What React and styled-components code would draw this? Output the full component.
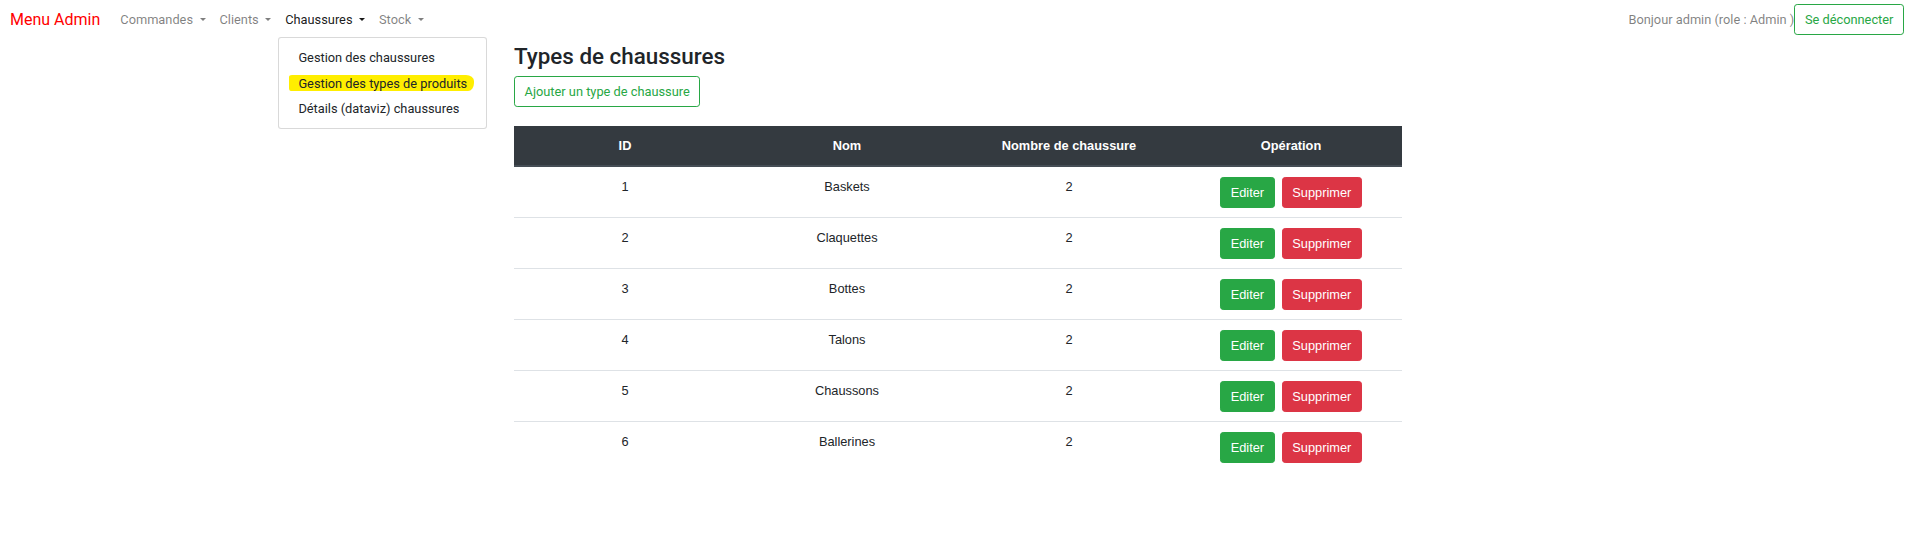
import React from "react";
import styled, { createGlobalStyle } from 'styled-components';

const GlobalStyle = createGlobalStyle`
    body {
        margin: 0;
        background: #fff;
        font-family: Roboto, "Liberation Sans", sans-serif;
        font-size: 12.8px;
        line-height: 1.5;
        color: #212529;
    }
`

const Navbar = styled.nav`
    display: flex;
    align-items: center;
    height: 39px;
    padding: 0 12px 0 10px;
`

const Brand = styled.a`
    font-size: 16px;
    line-height: 1.5;
    color: #ff0000;
    margin-right: 13px;
    white-space: nowrap;
`

const NavList = styled.ul`
    display: flex;
    list-style: none;
    margin: 0;
    padding: 0;
`

const NavItem = styled.li`
    position: relative;
`

const NavLink = styled.a`
    display: block;
    padding: 6.4px 7px;
    line-height: 19.2px;
    color: ${props => props.$active ? 'rgba(0, 0, 0, 0.9)' : 'rgba(0, 0, 0, 0.5)'};
    white-space: nowrap;

    &::after {
        content: "";
        display: inline-block;
        margin-left: 6.5px;
        vertical-align: 3.3px;
        border-top: 3.4px solid;
        border-right: 3.4px solid transparent;
        border-left: 3.4px solid transparent;
    }
`

const DropdownMenu = styled.div`
    position: absolute;
    top: calc(100% + 2px);
    left: 0;
    width: 209px;
    box-sizing: border-box;
    padding: 6.4px 0;
    background: #fff;
    border: 1px solid rgba(0, 0, 0, 0.15);
    border-radius: 3.2px;
    z-index: 10;
`

const DropdownItem = styled.a`
    display: block;
    padding: 3.2px 19.2px;
    line-height: 19.2px;
    color: #212529;
    white-space: nowrap;
`

const Marker = styled.span`
    margin-left: -9px;
    padding: 1px 7px 0 9px;
    background: #ffee00;
    border-radius: 3px 8px 6px 2px / 2px 6px 8px 3px;
`

const UserBox = styled.div`
    margin-left: auto;
    display: flex;
    align-items: center;
`

const Greeting = styled.span`
    color: rgba(0, 0, 0, 0.5);
    white-space: nowrap;
`

const OutlineButton = styled.button`
    font-family: Roboto, "Liberation Sans", sans-serif;
    font-size: 12.8px;
    line-height: 19.2px;
    padding: 4.8px 9.6px;
    color: #28a745;
    background: transparent;
    border: 1px solid #28a745;
    border-radius: 3.2px;
    white-space: nowrap;
    cursor: pointer;
`

const Container = styled.main`
    max-width: 888px;
    margin: 0 auto;
    padding: 4px 12px 0;
`

const Title = styled.h3`
    margin: 0 0 6.4px;
    font-size: 22.4px;
    font-weight: 500;
    line-height: 1.2;
`

const Table = styled.table`
    width: 100%;
    margin-top: 19px;
    border-collapse: collapse;
    table-layout: fixed;
    font-family: "Liberation Sans", Arial, sans-serif;
    font-size: 12.8px;
    color: #212529;
`

const HeadCell = styled.th`
    padding: 10.1px 9.6px;
    line-height: 19.2px;
    background: #343a40;
    color: #fff;
    font-weight: 700;
    text-align: center;
    border-bottom: 2px solid #454d55;
`

const Cell = styled.td`
    padding: 9.6px;
    line-height: 19.2px;
    text-align: center;
    vertical-align: top;
    border-top: 1px solid #dee2e6;
`

const Actions = styled.div`
    display: flex;
    justify-content: center;
    gap: 7px;
`

const ActionButton = styled.button`
    font-family: "Liberation Sans", Arial, sans-serif;
    font-size: 12.8px;
    line-height: 19.2px;
    padding: 4.8px 9.6px;
    color: #fff;
    background: ${props => props.$danger ? '#dc3545' : '#28a745'};
    border: 1px solid ${props => props.$danger ? '#dc3545' : '#28a745'};
    border-radius: 3.2px;
    cursor: pointer;
`

const types = [
    { id: 1, nom: "Baskets", nombre: 2 },
    { id: 2, nom: "Claquettes", nombre: 2 },
    { id: 3, nom: "Bottes", nombre: 2 },
    { id: 4, nom: "Talons", nombre: 2 },
    { id: 5, nom: "Chaussons", nombre: 2 },
    { id: 6, nom: "Ballerines", nombre: 2 },
];

const App = () => {
    return (
        <>
            <GlobalStyle />
            <Navbar>
                <Brand>Menu Admin</Brand>
                <NavList>
                    <NavItem><NavLink>Commandes</NavLink></NavItem>
                    <NavItem><NavLink>Clients</NavLink></NavItem>
                    <NavItem>
                        <NavLink $active>Chaussures</NavLink>
                        <DropdownMenu>
                            <DropdownItem>Gestion des chaussures</DropdownItem>
                            <DropdownItem><Marker>Gestion des types de produits</Marker></DropdownItem>
                            <DropdownItem>Détails (dataviz) chaussures</DropdownItem>
                        </DropdownMenu>
                    </NavItem>
                    <NavItem><NavLink>Stock</NavLink></NavItem>
                </NavList>
                <UserBox>
                    <Greeting>Bonjour admin (role : Admin )</Greeting>
                    <OutlineButton>Se déconnecter</OutlineButton>
                </UserBox>
            </Navbar>
            <Container>
                <Title>Types de chaussures</Title>
                <OutlineButton>Ajouter un type de chaussure</OutlineButton>
                <Table>
                    <thead>
                        <tr>
                            <HeadCell>ID</HeadCell>
                            <HeadCell>Nom</HeadCell>
                            <HeadCell>Nombre de chaussure</HeadCell>
                            <HeadCell>Opération</HeadCell>
                        </tr>
                    </thead>
                    <tbody>
                        {types.map(type => (
                            <tr key={type.id}>
                                <Cell>{type.id}</Cell>
                                <Cell>{type.nom}</Cell>
                                <Cell>{type.nombre}</Cell>
                                <Cell>
                                    <Actions>
                                        <ActionButton>Editer</ActionButton>
                                        <ActionButton $danger>Supprimer</ActionButton>
                                    </Actions>
                                </Cell>
                            </tr>
                        ))}
                    </tbody>
                </Table>
            </Container>
        </>
    )
}

export default App;
